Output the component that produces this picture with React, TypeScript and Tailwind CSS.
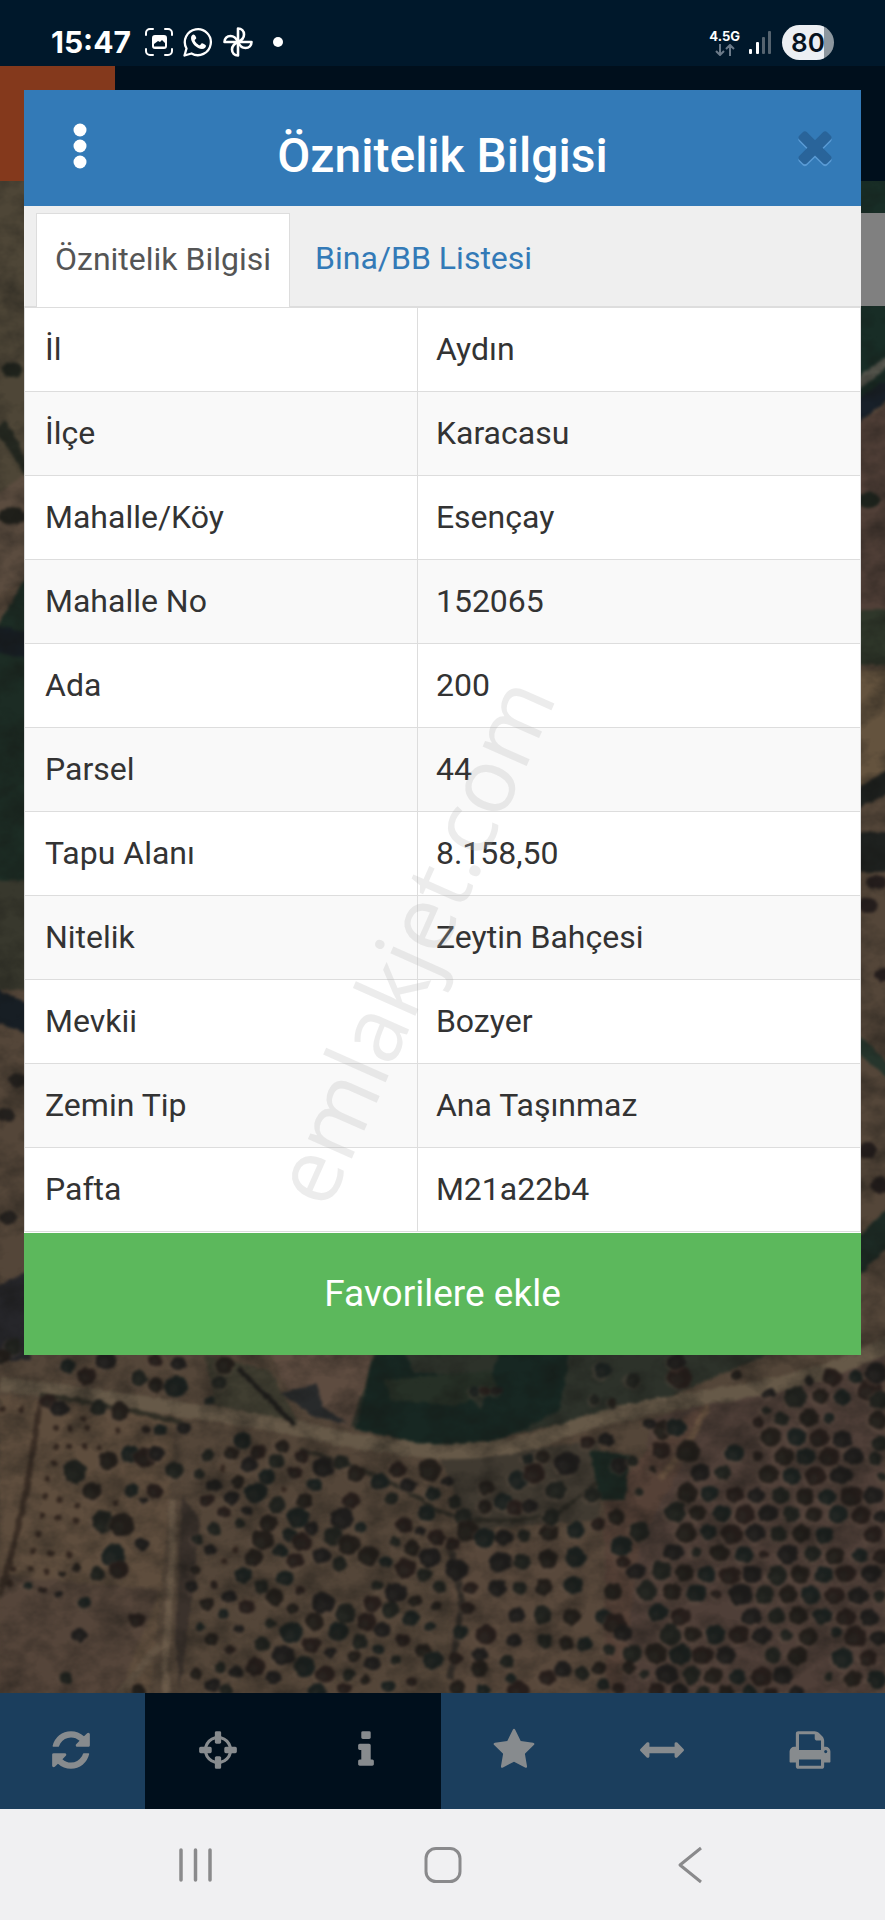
import type { ReactNode } from 'react';

const rows = [
  { label: 'İl', value: 'Aydın' },
  { label: 'İlçe', value: 'Karacasu' },
  { label: 'Mahalle/Köy', value: 'Esençay' },
  { label: 'Mahalle No', value: '152065' },
  { label: 'Ada', value: '200' },
  { label: 'Parsel', value: '44' },
  { label: 'Tapu Alanı', value: '8.158,50' },
  { label: 'Nitelik', value: 'Zeytin Bahçesi' },
  { label: 'Mevkii', value: 'Bozyer' },
  { label: 'Zemin Tip', value: 'Ana Taşınmaz' },
  { label: 'Pafta', value: 'M21a22b4' },
];

const icons = {
  refresh:
    'M1639 1056q0 5-1 7-64 268-268 434.5t-478 166.5q-146 0-282.5-55t-243.5-157l-129 129q-19 19-45 19t-45-19-19-45v-448q0-26 19-45t45-19h448q26 0 45 19t19 45-19 45l-137 137q71 66 161 102t187 36q134 0 250-65t186-179q11-17 53-117 8-23 30-23h192q13 0 22.5 9.5t9.5 22.5zm25-800v448q0 26-19 45t-45 19h-448q-26 0-45-19t-19-45 19-45l138-138q-148-137-349-137-134 0-250 65t-186 179q-11 17-53 117-8 23-30 23h-199q-13 0-22.5-9.5t-9.5-22.5v-7q65-268 270-434.5t480-166.5q146 0 284 55.5t245 156.5l130-129q19-19 45-19t45 19 19 45z',
  crosshairs:
    'M1325 1024h-109q-26 0-45-19t-19-45v-128q0-26 19-45t45-19h109q-32-108-112.5-188.5t-188.5-112.5v109q0 26-19 45t-45 19h-128q-26 0-45-19t-19-45v-109q-108 32-188.5 112.5t-112.5 188.5h109q26 0 45 19t19 45v128q0 26-19 45t-45 19h-109q32 108 112.5 188.5t188.5 112.5v-109q0-26 19-45t45-19h128q26 0 45 19t19 45v109q108-32 188.5-112.5t112.5-188.5zm339-192v128q0 26-19 45t-45 19h-143q-37 161-154.5 278.5t-278.5 154.5v143q0 26-19 45t-45 19h-128q-26 0-45-19t-19-45v-143q-161-37-278.5-154.5t-154.5-278.5h-143q-26 0-45-19t-19-45v-128q0-26 19-45t45-19h143q37-161 154.5-278.5t278.5-154.5v-143q0-26 19-45t45-19h128q26 0 45 19t19 45v143q161 37 278.5 154.5t154.5 278.5h143q26 0 45 19t19 45z',
  info:
    'M1216 1344v128q0 26-19 45t-45 19h-512q-26 0-45-19t-19-45v-128q0-26 19-45t45-19h64v-384h-64q-26 0-45-19t-19-45v-128q0-26 19-45t45-19h384q26 0 45 19t19 45v576h64q26 0 45 19t19 45zm-128-1152v192q0 26-19 45t-45 19h-256q-26 0-45-19t-19-45v-192q0-26 19-45t45-19h256q26 0 45 19t19 45z',
  star:
    'M1728 647q0 22-26 48l-363 354 86 500q1 7 1 20 0 21-10.5 35.5t-30.5 14.5q-19 0-40-12l-449-236-449 236q-22 12-40 12-21 0-31.5-14.5t-10.5-35.5q0-6 2-20l86-500-364-354q-25-27-25-48 0-37 56-46l502-73 225-455q19-41 49-41t49 41l225 455 502 73q56 9 56 46z',
  arrows:
    'M1792 896q0 26-19 45l-256 256q-19 19-45 19t-45-19-19-45v-128h-1024v128q0 26-19 45t-45 19-45-19l-256-256q-19-19-19-45t19-45l256-256q19-19 45-19t45 19 19 45v128h1024v-128q0-26 19-45t45-19 45 19l256 256q19 19 19 45z',
  print:
    'M448 1536h896v-256h-896v256zm0-640h896v-384h-160q-40 0-68-28t-28-68v-160h-640v640zm1152 64q0-26-19-45t-45-19-45 19-19 45 19 45 45 19 45-19 19-45zm128 0v416q0 13-9.5 22.5t-22.5 9.5h-224v160q0 40-28 68t-68 28h-960q-40 0-68-28t-28-68v-160h-224q-13 0-22.5-9.5t-9.5-22.5v-416q0-79 56.5-135.5t135.5-56.5h64v-544q0-40 28-68t68-28h672q40 0 88 20t76 48l152 152q28 28 48 76t20 88v256h64q79 0 135.5 56.5t56.5 135.5z',
  times:
    'M1490 1322q0 40-28 68l-136 136q-28 28-68 28t-68-28l-294-294-294 294q-28 28-68 28t-68-28l-136-136q-28-28-28-68t28-68l294-294-294-294q-28-28-28-68t28-68l136-136q28-28 68-28t68 28l294 294 294-294q28-28 68-28t68 28l136 136q28 28 28 68t-28 68l-294 294 294 294q28 28 28 68z',
};

function Icon({ path, className }: { path: string; className: string }) {
  return (
    <svg viewBox="0 0 1792 1792" className={className} fill="currentColor" aria-hidden="true">
      <path d={path} />
    </svg>
  );
}

// x, y, radius of each tree crown, in thirds of a map pixel
const westTrees = [
  40, 20, 26, 5, 50, 24, 202, 78, 22, 260, 108, 26, 318, 62, 28, 418, 115, 26, 470, 135, 24, 528, 140, 32, 465, 60, 18,
  535, 70, 22, 660, 128, 22, 675, 75, 26, 630, 182, 14, 145, 185, 24, 180, 205, 24, 296, 202, 24, 360, 214, 28, 480, 270, 20,
  438, 270, 11, 552, 264, 18, 225, 395, 34, 325, 362, 28, 390, 342, 28, 435, 352, 30, 470, 340, 20, 523, 390, 28, 276, 453, 28,
  395, 450, 20, 465, 454, 22, 430, 480, 11, 310, 545, 34, 365, 555, 36, 340, 645, 34, 358, 690, 28, 425, 612, 20, 292, 702, 22,
  230, 684, 12, 253, 788, 18, 410, 840, 23, 240, 886, 20, 197, 1014, 18, 186, 702, 11, 84, 736, 11, 128, 752, 11, 176, 764, 9,
  625, 345, 20, 695, 340, 22, 727, 302, 25, 775, 335, 22, 748, 372, 24, 830, 365, 24, 848, 320, 20, 800, 410, 24, 885, 397, 21,
  642, 436, 20, 597, 402, 15, 714, 425, 18, 768, 458, 32, 622, 480, 19, 695, 474, 20, 832, 495, 25, 914, 480, 25, 943, 433, 21,
  905, 350, 18, 972, 382, 30, 1025, 365, 24, 1070, 400, 26, 1140, 425, 26, 1195, 388, 23, 1225, 435, 22, 1175, 475, 20, 1290, 390, 34,
  1300, 462, 20, 672, 517, 18, 740, 512, 14, 722, 550, 17, 806, 550, 26, 895, 532, 32, 1054, 480, 25, 1026, 535, 32, 643, 568, 20,
  788, 598, 32, 870, 584, 22, 908, 606, 28, 935, 565, 18, 1000, 588, 31, 1047, 614, 32, 1082, 562, 16, 1212, 555, 22, 1260, 572, 15,
  1185, 606, 16, 1236, 624, 24, 1280, 520, 24, 1310, 592, 26, 630, 630, 17, 592, 598, 16, 760, 653, 26, 842, 632, 22, 884, 660, 24,
  965, 646, 23, 1020, 670, 22, 1106, 648, 32, 1158, 666, 18, 1217, 685, 30, 1290, 652, 29, 1274, 704, 23, 586, 690, 15, 730, 705, 24,
  642, 735, 11, 690, 770, 21, 785, 740, 23, 824, 772, 26, 855, 714, 24, 900, 752, 14, 970, 788, 32, 1038, 820, 30, 945, 843, 28,
  1015, 875, 30, 1118, 790, 26, 1187, 758, 30, 1172, 810, 26, 1245, 782, 20, 1232, 834, 24, 1100, 844, 27, 1147, 870, 21, 1133, 736, 18,
  621, 792, 20, 670, 822, 14, 740, 802, 21, 717, 866, 14, 812, 850, 16, 878, 805, 15, 875, 877, 32, 935, 914, 26, 850, 946, 32,
  785, 912, 23, 635, 896, 19, 600, 862, 15, 690, 928, 14, 993, 937, 16, 1080, 905, 24, 1062, 948, 21, 1135, 928, 16, 1208, 900, 20,
  1116, 970, 21, 1188, 960, 16, 1270, 932, 24, 1300, 960, 28, 768, 980, 26, 708, 996, 20, 662, 983, 18, 588, 1002, 17, 912, 978, 30,
  975, 1002, 28, 820, 1014, 20, 1047, 1004, 18, 1096, 1018, 14, 1165, 1038, 20, 1235, 1025, 14, 640, 1035, 21, 680, 1050, 20,
  415, 1050, 20, 950, 1055, 26, 1032, 1046, 18, 575, 740, 16, 1318, 740, 20, 1308, 800, 14, 1292, 858, 15,
];

const eastTrees = [
  1058, 172, 32, 1133, 168, 24, 1198, 172, 24, 1168, 112, 26, 1100, 122, 12, 1015, 237, 22, 1098, 232, 28, 1160, 234, 15, 945, 247, 15,
  978, 160, 16, 970, 212, 14, 983, 291, 30, 1060, 291, 28, 1128, 294, 27, 1198, 297, 27, 1310, 310, 24, 1023, 348, 28, 1088, 350, 29,
  1160, 350, 29, 1232, 348, 27, 1295, 355, 20, 735, 334, 36, 877, 340, 28, 945, 350, 14, 773, 398, 27, 840, 398, 24, 977, 402, 29,
  1047, 408, 26, 1118, 408, 28, 1194, 405, 30, 1318, 410, 14, 735, 458, 30, 800, 460, 25, 875, 464, 24, 940, 466, 23, 1012, 466, 26,
  1086, 470, 27, 1152, 470, 25, 1225, 468, 32, 1292, 466, 27, 697, 515, 31, 764, 518, 26, 836, 520, 26, 905, 522, 29, 976, 520, 26,
  1046, 522, 26, 1112, 524, 24, 1185, 522, 28, 1256, 526, 26, 1316, 528, 20, 590, 573, 31, 730, 578, 31, 797, 576, 23, 868, 582, 31,
  938, 578, 27, 1006, 582, 25, 1075, 580, 27, 1144, 586, 26, 1290, 584, 26, 692, 636, 26, 760, 636, 15, 830, 638, 28, 905, 644, 26,
  964, 642, 11, 1034, 642, 28, 1110, 640, 26, 1176, 646, 28, 1250, 646, 22, 1314, 650, 22, 580, 694, 26, 655, 690, 29, 725, 698, 27,
  790, 702, 25, 862, 706, 30, 928, 703, 27, 1003, 706, 30, 1072, 704, 27, 1142, 704, 26, 1208, 700, 27, 1284, 702, 27, 613, 752, 30,
  688, 754, 28, 760, 760, 28, 820, 764, 13, 894, 764, 32, 965, 765, 28, 1035, 763, 26, 1103, 765, 27, 1175, 766, 27, 1246, 767, 27,
  1310, 768, 18, 510, 754, 26, 645, 817, 27, 712, 830, 29, 926, 830, 26, 1000, 828, 24, 1066, 826, 27, 1138, 828, 27, 1208, 832, 27,
  1280, 832, 25, 682, 882, 31, 750, 882, 25, 818, 884, 29, 888, 884, 27, 957, 886, 25, 1028, 886, 19, 1096, 890, 28, 1180, 876, 15,
  1238, 890, 31, 1308, 893, 23, 568, 940, 29, 640, 940, 32, 712, 944, 31, 780, 945, 29, 850, 946, 27, 990, 944, 24, 1064, 948, 28,
  1200, 954, 31, 1275, 955, 25, 672, 1002, 29, 745, 1006, 27, 812, 1008, 27, 884, 1010, 24, 957, 1010, 29, 1020, 1006, 26, 1158, 1010, 13,
  1230, 1016, 27, 1302, 1018, 27, 640, 1054, 24, 710, 1052, 22, 780, 1055, 20, 850, 1056, 22, 920, 1056, 20, 984, 1056, 18, 1060, 1056, 20,
  603, 1002, 16, 558, 982, 19, 483, 830, 24, 515, 850, 32, 540, 880, 24, 500, 930, 17, 468, 985, 20, 480, 1034, 17, 525, 1046, 18,
  183, 592, 22, 243, 588, 20, 318, 576, 28, 398, 570, 25, 464, 552, 18, 173, 667, 32, 238, 664, 26, 315, 656, 29, 398, 652, 29,
  84, 744, 20, 162, 744, 26, 230, 744, 21, 303, 740, 25, 391, 734, 28, 74, 804, 20, 222, 825, 22, 300, 826, 27, 386, 830, 27,
  52, 876, 22, 130, 884, 30, 212, 900, 20, 305, 902, 24, 370, 908, 23, 424, 912, 22, 38, 955, 18, 112, 944, 21, 192, 964, 20,
  108, 986, 26, 205, 1014, 14, 314, 1012, 25, 358, 988, 24, 417, 998, 21, 44, 1042, 22, 122, 1050, 20, 225, 1052, 30,
  12, 424, 15, 35, 486, 20, 130, 442, 24, 226, 420, 28, 275, 400, 30, 372, 370, 34, 340, 450, 30, 125, 500, 22, 180, 482, 26,
  216, 502, 22, 260, 498, 20, 325, 530, 26, 300, 350, 20, 255, 356, 14, 435, 306, 22, 490, 298, 20, 448, 466, 24, 520, 530, 24,
  535, 618, 32, 540, 665, 18, 40, 690, 32, 60, 530, 26, 75, 572, 34, 125, 592, 30, 30, 612, 20, 530, 375, 22, 570, 362, 18,
  660, 270, 30, 700, 262, 28, 655, 330, 26, 620, 250, 16, 590, 456, 12, 628, 388, 10, 95, 155, 15, 125, 152, 13, 160, 152, 14,
  455, 180, 15, 508, 188, 12, 480, 90, 24, 710, 112, 34, 700, 65, 24, 570, 120, 22, 880, 106, 16, 1240, 110, 20, 1280, 150, 34,
  1300, 100, 30, 1310, 180, 30, 1305, 240, 28,
];

const saplings = [
  168, 264, 212, 264, 260, 264, 355, 272, 168, 320, 208, 318, 257, 320, 296, 322, 162, 370, 143, 416, 134, 468, 178, 480, 232, 497,
  127, 524, 173, 533, 226, 543, 348, 490, 115, 582, 100, 634, 153, 640, 208, 646, 40, 686, 92, 688, 142, 694, 28, 730, 250, 238,
  62, 208, 8, 208, 668, 385, 850, 448, 706, 630, 672, 664,
];

const crowns = ['#20221e', '#231e1a', '#1b211f', '#271e1b', '#1f1d1c'];

function Trees({ data }: { data: number[] }) {
  const trees: ReactNode[] = [];
  for (let i = 0; i < data.length; i += 3) {
    const [x, y, r] = data.slice(i, i + 3);
    trees.push(
      <g key={i}>
        <ellipse cx={x - 4} cy={y + 4} rx={r + 6} ry={r + 4} fill="#665649" opacity="0.3" />
        <ellipse cx={x} cy={y} rx={r + ((i * 7) % 5)} ry={r + 1 - ((i * 5) % 4)} fill={crowns[(i / 3) % 5]} />
        <ellipse cx={x - r / 4} cy={y + r / 4} rx={r / 2} ry={r / 2} fill="#30312b" opacity="0.35" />
      </g>,
    );
  }
  return <>{trees}</>;
}

function SatelliteMap() {
  return (
    <svg
      viewBox="0 181 885 1512"
      preserveAspectRatio="xMidYMax slice"
      className="absolute inset-0 size-full"
      aria-hidden="true"
    >
      <defs>
        <filter id="soft" x="-5%" y="-5%" width="110%" height="110%" colorInterpolationFilters="sRGB">
          <feTurbulence type="fractalNoise" baseFrequency="0.12" numOctaves="2" seed="4" result="noise" />
          <feDisplacementMap in="SourceGraphic" in2="noise" scale="5" xChannelSelector="R" yChannelSelector="G" />
          <feGaussianBlur stdDeviation="1.4" />
        </filter>
        <filter id="ground" x="0" y="0" width="100%" height="100%" colorInterpolationFilters="sRGB">
          <feTurbulence type="fractalNoise" baseFrequency="0.03 0.04" numOctaves="4" seed="9" />
          <feColorMatrix values="0 0 0 0 0.08  0 0 0 0 0.08  0 0 0 0 0.07  2 0 0 0 -0.75" />
        </filter>
      </defs>
      <rect y="181" width="885" height="1512" fill="#544639" />
      <g filter="url(#soft)">
        {/* ground either side of the panel */}
        <path d="M-10 170H30V560H-10z" fill="#4e4637" />
        <path d="M-10 500L30 470V575L-10 600z" fill="#5b4c3f" />
        <path d="M-10 640L30 570V885H-10z" fill="#1c2c24" />
        <path d="M-10 625L30 632V660L-10 650zM-10 985L30 1005V1035L-10 1020z" fill="#171e24" />
        <path d="M-10 880H30V990H-10z" fill="#38382d" />
        <ellipse cx="12" cy="370" rx="10" ry="8" fill="#20241d" />
        <ellipse cx="12" cy="516" rx="14" ry="9" fill="#1f1f1a" />
        <path d="M5 420Q20 440 28 470L28 480Q10 450 -5 430z" fill="#242820" />
        <ellipse cx="8" cy="1218" rx="9" ry="7" fill="#26221f" />
        <ellipse cx="18" cy="1080" rx="9" ry="7" fill="#26221f" />
        <ellipse cx="6" cy="1115" rx="9" ry="7" fill="#26221f" />
        <path d="M-10 1290L30 1270V1360H-10z" fill="#26262a" />
        <path d="M855 170H895V400H855z" fill="#182d26" />
        <path d="M855 400L895 375V395L855 425z" fill="#182029" />
        <path d="M855 380L895 350V362L855 392z" fill="#55564d" />
        <path d="M855 425L895 400V620H855z" fill="#503f37" />
        <ellipse cx="868" cy="500" rx="12" ry="8" fill="#1e241d" />
        <path d="M855 610H895V665H855z" fill="#2f372a" />
        <path d="M855 670H895V790H855z" fill="#64533e" />
        <path d="M855 790L895 765V790L855 810zM855 832H895V872H855z" fill="#1e211f" />
        <ellipse cx="876" cy="882" rx="10" ry="7" fill="#241d1c" />
        <ellipse cx="868" cy="905" rx="10" ry="7" fill="#241d1c" />
        <ellipse cx="884" cy="975" rx="10" ry="7" fill="#241d1c" />
        <path d="M855 1030L895 1070V1085L855 1050z" fill="#26352c" />
        <path d="M855 1240L895 1200V1240L855 1280z" fill="#1c2a24" />
        <ellipse cx="868" cy="1150" rx="9" ry="8" fill="#241d1c" />
        <ellipse cx="880" cy="1185" rx="9" ry="8" fill="#241d1c" />

        {/* fields below the panel */}
        <path d="M0 1395L175 1420L168 1520L150 1693H0z" fill="#5e4d3d" />
        <path d="M0 1575L160 1590L120 1693H0z" fill="#55453a" />
        <path d="M350 1340H800L650 1405L440 1450L345 1425L370 1380z" fill="#2d322a" />
        <path d="M270 1350H375L350 1430L290 1400z" fill="#5e4c40" />
        <path d="M205 1355L270 1370L300 1425L215 1405z" fill="#403e31" />
        <path d="M650 1420L885 1350V1693H600L640 1540z" fill="#4f3f38" />
        <path d="M605 1500L665 1430L710 1400L690 1450L640 1540L620 1693H600z" fill="#554137" />
        <path d="M440 1460L600 1440L600 1520L470 1530z" fill="#403a31" />
        <path d="M450 1540H605V1693H450z" fill="#58483b" />
        <path d="M0 1384Q110 1398 200 1412T330 1436T443 1452Q510 1452 560 1432T720 1395T890 1343" fill="none" stroke="#665948" strokeWidth="15" />
        <path d="M172 1500Q174 1560 168 1620T168 1693" fill="none" stroke="#6a5a49" strokeWidth="7" />
        <path d="M120 1693L160 1645" fill="none" stroke="#635444" strokeWidth="8" />
        <path d="M708 1405L690 1440L660 1480" fill="none" stroke="#66513f" strokeWidth="7" />
        <path d="M40 1400Q30 1480 15 1540T0 1590" fill="none" stroke="#3b2e25" strokeWidth="6" />
        <path d="M40 1395Q110 1404 190 1425" fill="none" stroke="#302e25" strokeWidth="5" />
        <path d="M238 1368L295 1425" fill="none" stroke="#1d1c1a" strokeWidth="5" />
        <path d="M182 1495L200 1520L192 1600L180 1690L175 1640z" fill="#3b322c" />
        <path d="M300 1450Q380 1470 440 1512Q500 1530 560 1512L600 1480" fill="none" stroke="#2c2a23" strokeWidth="4" />
        <path d="M372 1358L400 1345L415 1372L455 1375L480 1410L500 1350L570 1350L560 1410L500 1440L430 1445L356 1430z" fill="#172722" />
        <path d="M385 1380L490 1370L500 1392L455 1405L390 1400z" fill="#263026" />
        <path d="M590 1450L630 1455L625 1500L600 1500z" fill="#1a2822" />
        <path d="M450 1545L462 1600L450 1680" fill="none" stroke="#302b26" strokeWidth="6" />
        <g transform="translate(0 1340) scale(0.3333)">
          <path d="M840 160L950 130L970 200L1040 250L950 235z" fill="#282a2b" />
          <Trees data={westTrees} />
          {saplings.map((x, i) =>
            i % 2 === 0 ? <circle key={i} cx={x} cy={saplings[i + 1]} r="9" fill="#33261f" /> : null,
          )}
        </g>
        <g transform="translate(443 1340) scale(0.3333)">
          <Trees data={eastTrees} />
        </g>
      </g>
      <rect y="181" width="885" height="1512" filter="url(#ground)" opacity="0.45" />
    </svg>
  );
}

function StatusBar() {
  return (
    <header className="flex h-[66px] items-center justify-between bg-[#00182b] px-[51px] pt-6 pb-1.5 text-white">
      <div className="flex items-center">
        <span className="font-[Inter] text-[30px] leading-9 font-bold">15:47</span>
        <svg viewBox="0 0 28 28" className="ml-3.5 size-7" fill="none" stroke="white" strokeWidth="2" strokeLinecap="round">
          <path d="M1 7V5a4 4 0 0 1 4-4h3M20 1h3a4 4 0 0 1 4 4v2M27 21v2a4 4 0 0 1-4 4h-3M8 27H5a4 4 0 0 1-4-4v-2" />
          <path fill="white" fillRule="evenodd" stroke="none" d="M10 7h9a3 3 0 0 1 3 3v8a3 3 0 0 1-3 3h-9a3 3 0 0 1-3-3v-8a3 3 0 0 1 3-3zm-1 11.500h11v-3.500l-3-3-2 2-2-1-4 3z" />
        </svg>
        <svg viewBox="0 0 30 30" className="ml-2.5 size-[30px]" fill="none" stroke="white" strokeWidth="2.300">
          <path strokeLinejoin="round" d="M1.500 28.500l2-7a13 13 0 1 1 5 5z" />
          <path fill="white" stroke="none" d="M10.500 7.500c-1 0-2.500 1.500-2.500 3.500 0 5 6 11 11 11 2.500 0 4-1.800 4-3.300 0-.8-3.500-2.500-4-2.500-.8 0-1.500 2-2.300 2-1.200 0-5-3.500-5-4.800 0-.8 1.600-1.300 1.600-2.300 0-.6-1.300-3.600-2.800-3.600z" />
        </svg>
        <svg viewBox="0 0 30 30" className="ml-2.5 size-[30px]" fill="none" stroke="white" strokeWidth="2.600" strokeLinejoin="round">
          <path d="M15 15V1.500c3.500 0 6 2.500 6 6 0 3-1.500 5.500-6 7.500z" />
          <path d="M15 15h13.500c0 3.500-2.500 6-6 6-3 0-5.500-1.500-7.500-6z" />
          <path d="M15 15v13.500c-3.500 0-6-2.500-6-6 0-3 1.500-5.500 6-7.500z" />
          <path d="M15 15H1.500c0-3.500 2.500-6 6-6 3 0 5.500 1.500 7.500 6z" />
        </svg>
        <span className="ml-5 size-2.5 rounded-full bg-white" />
      </div>
      <div className="flex items-center">
        <div className="flex flex-col items-center">
          <span className="font-[Inter] text-[13px] leading-4 font-bold">4.5G</span>
          <svg viewBox="0 0 20 12" className="h-3 w-5" fill="none" stroke="#6b7a89" strokeWidth="2">
            <path d="M5 0v11M1 7l4 4 4-4M15 12V1M11 5l4-4 4 4" />
          </svg>
        </div>
        <svg viewBox="0 0 24 24" className="ml-2 size-6">
          <rect x="1" y="19" width="3" height="5" rx="1" fill="white" />
          <rect x="8" y="12" width="3" height="12" rx="1" fill="white" />
          <rect x="14" y="7" width="3" height="17" rx="1" fill="#55636f" />
          <rect x="20" y="1" width="3" height="23" rx="1" fill="#55636f" />
        </svg>
        <span className="ml-2.5 flex h-[35px] w-[52px] items-center justify-center rounded-full bg-linear-to-r from-[#eceff3] from-80% to-[#8d979f] to-80% font-[Inter] text-[26px] font-semibold text-[#07131f]">
          80
        </span>
      </div>
    </header>
  );
}

function AttributePanel() {
  return (
    <section className="absolute inset-x-6 top-6 bg-white" aria-labelledby="panel-title">
      <div className="flex h-[116px] items-center justify-between bg-[#337ab7] px-3">
        <button type="button" aria-label="Menü" className="flex h-16 w-20 items-center justify-center pb-1 pl-2">
          <svg viewBox="0 0 14 46" className="h-[46px] w-3.5" fill="white">
            <circle cx="7" cy="7" r="6.500" />
            <circle cx="7" cy="23" r="6.500" />
            <circle cx="7" cy="39" r="6.500" />
          </svg>
        </button>
        <h2 id="panel-title" className="pt-4 text-[48px] leading-[56px] font-medium text-white">
          Öznitelik Bilgisi
        </h2>
        <button type="button" aria-label="Kapat" className="flex h-16 w-20 items-center justify-center pb-1 pl-3">
          <Icon path={icons.times} className="size-[50px] text-[#29649a] drop-shadow-[0_2px_0_#5a9bd5]" />
        </button>
      </div>
      <nav className="flex h-[101px] items-end border-b border-[#ddd] bg-[#efefef] px-3 text-[32px]">
        <a href="#oznitelik" className="-mb-px flex h-[94px] items-center border border-b-0 border-[#ddd] bg-white px-[18px] pb-[3px] text-[#555]">
          Öznitelik Bilgisi
        </a>
        <a href="#bina" className="flex h-[93px] items-center px-[25px] pb-[3px] text-[#337ab7]">
          Bina/BB Listesi
        </a>
      </nav>
      <div className="pb-px">
        <table className="w-full border-collapse text-left text-[32px] leading-[45px] text-[#333]">
          <tbody>
            {rows.map((row) => (
              <tr key={row.label} className="even:bg-[#f9f9f9]">
                <th scope="row" className="h-[84px] w-[47%] border border-[#ddd] px-5 font-normal">
                  {row.label}
                </th>
                <td className="h-[84px] border border-[#ddd] px-[18px]">{row.value}</td>
              </tr>
            ))}
          </tbody>
        </table>
      </div>
      <button type="button" className="block h-[122px] w-full bg-[#5cb85c] text-[37px] text-white">
        Favorilere ekle
      </button>
    </section>
  );
}

function ToolButton({ label, path, className }: { label: string; path: string; className: string }) {
  return (
    <button
      type="button"
      aria-label={label}
      className={`flex items-center justify-center pr-[3px] pb-0.5 text-[#878b8e] ${className}`}
    >
      <Icon path={path} className="size-11" />
    </button>
  );
}

export default function App() {
  return (
    <div className="relative flex min-h-screen flex-col overflow-hidden bg-[#f0f0f2] font-[Roboto,sans-serif]">
      <StatusBar />
      <main className="relative flex flex-1 flex-col">
        <div className="flex h-[115px] bg-[#000f1c]">
          <div className="w-[115px] bg-[#84391c]" />
        </div>
        <div className="relative flex flex-1 flex-col overflow-hidden">
          <SatelliteMap />
          <div className="relative mt-8 ml-12 h-[93px] bg-[#808080]" />
        </div>
        <AttributePanel />
      </main>
      <div className="flex h-[116px]">
        <ToolButton label="Yenile" path={icons.refresh} className="w-[145px] bg-[#1b3e5d]" />
        <ToolButton label="Konum" path={icons.crosshairs} className="flex-1 bg-[#000f1c]" />
        <ToolButton label="Bilgi" path={icons.info} className="flex-1 bg-[#000f1c]" />
        <ToolButton label="Favoriler" path={icons.star} className="flex-1 bg-[#1b3e5d]" />
        <ToolButton label="Ölçüm" path={icons.arrows} className="flex-1 bg-[#1b3e5d]" />
        <ToolButton label="Yazdır" path={icons.print} className="flex-1 bg-[#1b3e5d]" />
      </div>
      <nav className="grid h-[111px] grid-cols-3 items-center justify-items-center px-[72px] text-[#8a8a8c]">
        <button type="button" aria-label="Son uygulamalar">
          <svg viewBox="0 0 38 38" className="size-[38px]" stroke="currentColor" strokeWidth="3.500" strokeLinecap="round">
            <path d="M4 4v30M18.500 4v30M33 4v30" />
          </svg>
        </button>
        <button type="button" aria-label="Ana ekran">
          <svg viewBox="0 0 38 38" className="size-[38px]" fill="none" stroke="currentColor" strokeWidth="3">
            <rect x="2" y="2.500" width="34" height="33" rx="10" />
          </svg>
        </button>
        <button type="button" aria-label="Geri">
          <svg viewBox="0 0 38 38" className="size-[38px]" fill="none" stroke="currentColor" strokeWidth="3">
            <path d="M30 2L9 19l21 17" strokeLinejoin="round" />
          </svg>
        </button>
      </nav>
      <div className="pointer-events-none absolute inset-0 flex items-center justify-center pr-16 pb-10">
        <span className="-rotate-[66deg] font-['Open_Sans'] text-[90px] leading-none font-medium text-[#b4b4b4]/25">emlakjet.com</span>
      </div>
    </div>
  );
}
